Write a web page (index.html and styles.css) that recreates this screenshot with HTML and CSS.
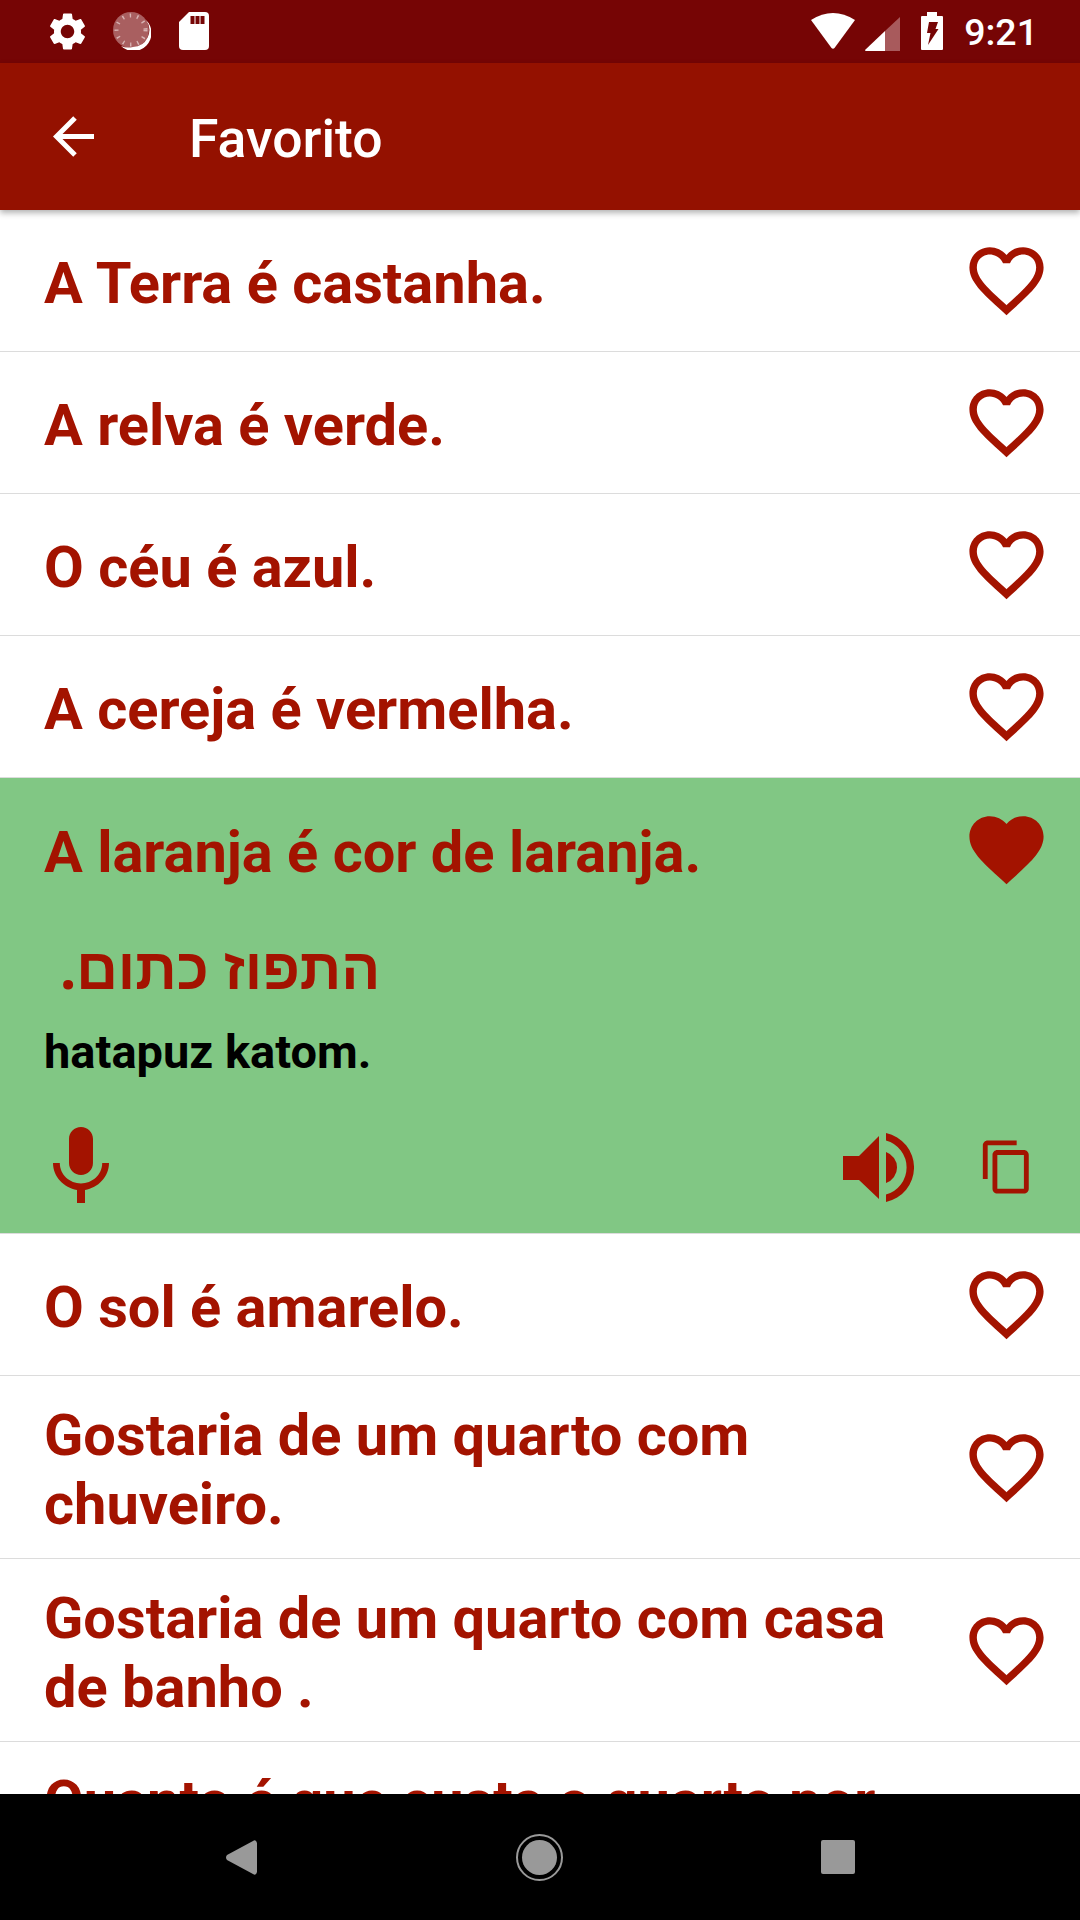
FILE: index.html
```html
<!DOCTYPE html>
<html lang="pt">
<head>
  <meta charset="UTF-8" />
  <meta name="viewport" content="width=device-width, initial-scale=1.0" />
  <link rel="stylesheet" href="styles.css">
</head>
<body>
  <svg class="defs" width="0" height="0">
    <symbol id="heart-line" viewBox="0 0 24 24">
      <path d="M16.5 3c-1.74 0-3.41.81-4.5 2.09C10.91 3.81 9.24 3 7.5 3 4.42 3 2 5.42 2 8.5c0 3.78 3.4 6.86 8.55 11.54L12 21.35l1.45-1.32C18.6 15.36 22 12.28 22 8.5 22 5.42 19.58 3 16.5 3zm-4.4 15.55l-.1.1-.1-.1C7.14 14.24 4 11.39 4 8.5 4 6.5 5.5 5 7.5 5c1.54 0 3.04.99 3.57 2.36h1.87C13.46 5.99 14.96 5 16.5 5c2 0 3.5 1.5 3.5 3.5 0 2.89-3.14 5.74-7.9 10.05z"/>
    </symbol>
    <symbol id="heart-full" viewBox="0 0 24 24">
      <path d="M12 21.35l-1.45-1.32C5.4 15.36 2 12.28 2 8.5 2 5.42 4.42 3 7.5 3c1.74 0 3.41.81 4.5 2.09C13.09 3.81 14.76 3 16.5 3 19.58 3 22 5.42 22 8.5c0 3.78-3.4 6.86-8.55 11.54L12 21.35z"/>
    </symbol>
  </svg>

  <div class="screen">
    <!-- Status bar -->
    <div class="status-bar">
      <div class="status-left">
        <svg class="icon-gear" viewBox="0 0 24 24"><path fill="#fff" d="M19.14 12.94c.04-.3.06-.61.06-.94 0-.32-.02-.64-.07-.94l2.03-1.58c.18-.14.23-.41.12-.61l-1.92-3.32c-.12-.22-.37-.29-.59-.22l-2.39.96c-.5-.38-1.03-.7-1.62-.94l-.36-2.54c-.04-.24-.24-.41-.48-.41h-3.84c-.24 0-.43.17-.47.41l-.36 2.54c-.59.24-1.13.57-1.62.94l-2.39-.96c-.22-.08-.47 0-.59.22L2.74 8.87c-.12.21-.08.47.12.61l2.03 1.58c-.05.3-.09.63-.09.94s.02.64.07.94l-2.03 1.58c-.18.14-.23.41-.12.61l1.92 3.32c.12.22.37.29.59.22l2.39-.96c.5.38 1.03.7 1.62.94l.36 2.54c.05.24.24.41.48.41h3.84c.24 0 .44-.17.47-.41l.36-2.54c.59-.24 1.13-.56 1.62-.94l2.39.96c.22.08.47 0 .59-.22l1.92-3.32c.12-.22.07-.47-.12-.61l-2.01-1.58zM12 15.6c-1.98 0-3.6-1.62-3.6-3.6s1.62-3.6 3.6-3.6 3.6 1.62 3.6 3.6-1.62 3.6-3.6 3.6z"/></svg>
        <svg class="icon-disc" viewBox="0 0 38 38">
          <circle cx="18" cy="18" r="18" fill="#a95f60"/>
          <circle cx="18" cy="18" r="14.5" fill="none" stroke="#d8b4b4" stroke-width="4" stroke-dasharray="1.4 6"/>
          <path fill="#fff" d="M33 8 A18 18 0 0 1 8 34 A19 19 0 0 0 20 35 A17 17 0 0 0 33 8Z"/>
        </svg>
        <svg class="icon-sd" viewBox="0 0 30 38">
          <path fill="#fff" d="M10 0H26a4 4 0 0 1 4 4V34a4 4 0 0 1-4 4H4a4 4 0 0 1-4-4V10Z"/>
          <path fill="#760505" d="M11.500 4h4v8h-4zM16.500 4h4v8h-4zM21.500 4h4v8h-4z"/>
        </svg>
      </div>
      <div class="status-right">
        <svg class="icon-wifi" viewBox="0 0 44 36"><path fill="#fff" d="M0 7Q22-7 44 7L23.500 35Q22 36.500 20.500 35Z"/></svg>
        <svg class="icon-signal" viewBox="0 0 35 35">
          <path fill="#a85a5c" d="M35 1V35H20V15Z"/>
          <path fill="#fff" d="M20 15V35H1Q0 35 0 34Z"/>
        </svg>
        <svg class="icon-battery" viewBox="0 0 22 38">
          <path fill="#fff" d="M6 0H16V4H21a1 1 0 0 1 1 1V37a1 1 0 0 1-1 1H1a1 1 0 0 1-1-1V5a1 1 0 0 1 1-1H6Z"/>
          <path fill="#760505" d="M8 10H17L14.500 17H17.500L7 33L9.500 21H6Z"/>
        </svg>
        <span class="clock">9:21</span>
      </div>
    </div>

    <!-- Toolbar -->
    <div class="toolbar">
      <svg class="icon-back" viewBox="0 0 41 41"><path fill="none" stroke="#fff" stroke-width="5" d="M41 20.500H4M22 2L3.500 20.500L22 39"/></svg>
      <div class="toolbar-title">Favorito</div>
    </div>

    <!-- Phrase list -->
    <div class="list">
      <div class="row">
        <div class="phrase">A Terra é castanha.</div>
        <svg class="heart"><use href="#heart-line"/></svg>
      </div>
      <div class="row">
        <div class="phrase">A relva é verde.</div>
        <svg class="heart"><use href="#heart-line"/></svg>
      </div>
      <div class="row">
        <div class="phrase">O céu é azul.</div>
        <svg class="heart"><use href="#heart-line"/></svg>
      </div>
      <div class="row">
        <div class="phrase">A cereja é vermelha.</div>
        <svg class="heart"><use href="#heart-line"/></svg>
      </div>

      <div class="open-item">
        <div class="row row-open">
          <div class="phrase">A laranja é cor de laranja.</div>
          <svg class="heart"><use href="#heart-full"/></svg>
        </div>
        <div class="translation" dir="rtl">התפוז כתום.</div>
        <div class="reading">hatapuz katom.</div>
        <div class="actions">
          <svg class="icon-mic" viewBox="0 0 24 24"><path d="M12 14c1.66 0 2.99-1.34 2.99-3L15 5c0-1.66-1.34-3-3-3S9 3.34 9 5v6c0 1.66 1.34 3 3 3zm5.3-3c0 3-2.54 5.100-5.300 5.100S6.700 14 6.700 11H5c0 3.410 2.720 6.230 6 6.720V21h2v-3.280c3.280-.48 6-3.300 6-6.720h-1.700z"/></svg>
          <div class="actions-right">
            <svg class="icon-speaker" viewBox="0 0 71 69"><path d="M0 23H16L36 3V66L16 47H0Z"/><path d="M43 0A35.250 35.250 0 0 1 43 69V61.500A28 28 0 0 0 43 7.500Z"/><path d="M43 19A16.400 16.400 0 0 1 43 50Z"/></svg>
            <svg class="icon-copy" viewBox="0 0 24 24"><path d="M16 1H4c-1.100 0-2 .9-2 2v14h2V3h12V1zm3 4H8c-1.100 0-2 .9-2 2v14c0 1.100.9 2 2 2h11c1.100 0 2-.9 2-2V7c0-1.100-.9-2-2-2zm0 16H8V7h11v14z"/></svg>
          </div>
        </div>
      </div>

      <div class="row">
        <div class="phrase">O sol é amarelo.</div>
        <svg class="heart"><use href="#heart-line"/></svg>
      </div>
      <div class="row">
        <div class="phrase">Gostaria de um quarto com chuveiro.</div>
        <svg class="heart"><use href="#heart-line"/></svg>
      </div>
      <div class="row">
        <div class="phrase">Gostaria de um quarto com casa de banho .</div>
        <svg class="heart"><use href="#heart-line"/></svg>
      </div>
      <div class="row">
        <div class="phrase">Quanto é que custa o quarto por noite?</div>
        <svg class="heart"><use href="#heart-line"/></svg>
      </div>
    </div>

    <!-- Navigation bar -->
    <div class="nav-bar">
      <svg class="nav-back" viewBox="0 0 31 35"><path d="M27 1Q30-1 31 3V32Q30 36 27 34L1 20Q-1 17.500 1 15Z"/></svg>
      <svg class="nav-home" viewBox="0 0 47 47"><circle cx="23.500" cy="23.500" r="22.500" fill="none" stroke="#999" stroke-width="2"/><circle cx="23.500" cy="23.500" r="17.500"/></svg>
      <div class="nav-square"></div>
    </div>
  </div>
</body>
</html>
```

FILE: styles.css
```css
* {
  box-sizing: border-box;
}

body {
  margin: 0;
  background-color: #ffffff;
  font-family: 'Roboto', 'Liberation Sans', sans-serif;
}

.defs {
  position: absolute;
}

svg {
  display: block;
  flex-shrink: 0;
}

.screen {
  display: flex;
  flex-direction: column;
  height: 1920px;
  overflow: hidden;
}

/* Status bar */
.status-bar {
  display: flex;
  justify-content: space-between;
  align-items: center;
  height: 63px;
  flex-shrink: 0;
  padding: 0 42px 1px 45px;
  background-color: #760505;
}

.status-left,
.status-right {
  display: flex;
  align-items: center;
}

.icon-gear {
  width: 45px;
  height: 45px;
}

.icon-disc {
  width: 38px;
  height: 38px;
  margin-left: 23px;
}

.icon-sd {
  width: 30px;
  height: 38px;
  margin-left: 28px;
}

.icon-wifi {
  width: 44px;
  height: 36px;
}

.icon-signal {
  width: 35px;
  height: 35px;
  margin: 4px 0 0 10px;
}

.icon-battery {
  width: 22px;
  height: 38px;
  margin-left: 21px;
}

.clock {
  margin: 2px 0 0 21px;
  font-size: 37.5px;
  font-weight: 500;
  color: #ffffff;
}

/* Toolbar */
.toolbar {
  position: relative;
  z-index: 1;
  display: flex;
  align-items: center;
  height: 147px;
  flex-shrink: 0;
  padding-left: 53px;
  background-color: #941100;
  box-shadow: 0 3px 6px rgba(0, 0, 0, 0.3);
}

.icon-back {
  width: 41px;
  height: 41px;
}

.toolbar-title {
  margin: 3px 0 0 95px;
  font-size: 53.5px;
  font-weight: 500;
  color: #ffffff;
}

/* List */
.list {
  flex: 1;
  min-height: 0;
  overflow: hidden;
}

.row {
  display: flex;
  align-items: center;
  justify-content: space-between;
  min-height: 142px;
  padding: 22px 29px 22px 44px;
  border-bottom: 1px solid #dcdcdc;
}

/* text sits a little under the middle of the row */
.phrase {
  flex: 1;
  padding-top: 3px;
  margin-bottom: -3px;
  font-size: 57.75px;
  line-height: 69px;
  font-weight: 700;
  color: #a31300;
}

.heart {
  width: 89px;
  height: 89px;
  margin-left: 40px;
  fill: #a31300;
}

.open-item {
  height: 456px;
  background-color: #81c784;
  border-bottom: 1px solid #dcdcdc;
}

.row-open {
  border-bottom: none;
}

.translation {
  width: fit-content;
  margin: 17px 0 0 60px;
  font-family: 'Noto Sans', 'Liberation Sans', sans-serif;
  font-size: 57.75px;
  line-height: 60px;
  font-weight: 700;
  color: #a31300;
}

.reading {
  margin: 25px 0 0 44px;
  font-size: 47px;
  line-height: 60px;
  font-weight: 700;
  color: #000000;
}

.actions {
  display: flex;
  align-items: center;
  justify-content: space-between;
  margin-top: 37px;
  padding: 0 44px 0 33px;
}

.actions svg {
  fill: #a31300;
}

.actions-right {
  display: flex;
  align-items: center;
}

.icon-mic {
  width: 96px;
  height: 96px;
}

.icon-speaker {
  width: 71px;
  height: 69px;
}

.icon-copy {
  width: 58px;
  height: 58px;
  margin-left: 64px;
}

/* Navigation bar */
.nav-bar {
  display: flex;
  align-items: center;
  height: 126px;
  flex-shrink: 0;
  padding-left: 226px;
  background-color: #000000;
}

.nav-back {
  width: 31px;
  height: 35px;
  fill: #999999;
}

.nav-home {
  width: 47px;
  height: 47px;
  margin-left: 259px;
  fill: #999999;
}

.nav-square {
  width: 34px;
  height: 34px;
  margin-left: 258px;
  border-radius: 2px;
  background-color: #999999;
}
```
